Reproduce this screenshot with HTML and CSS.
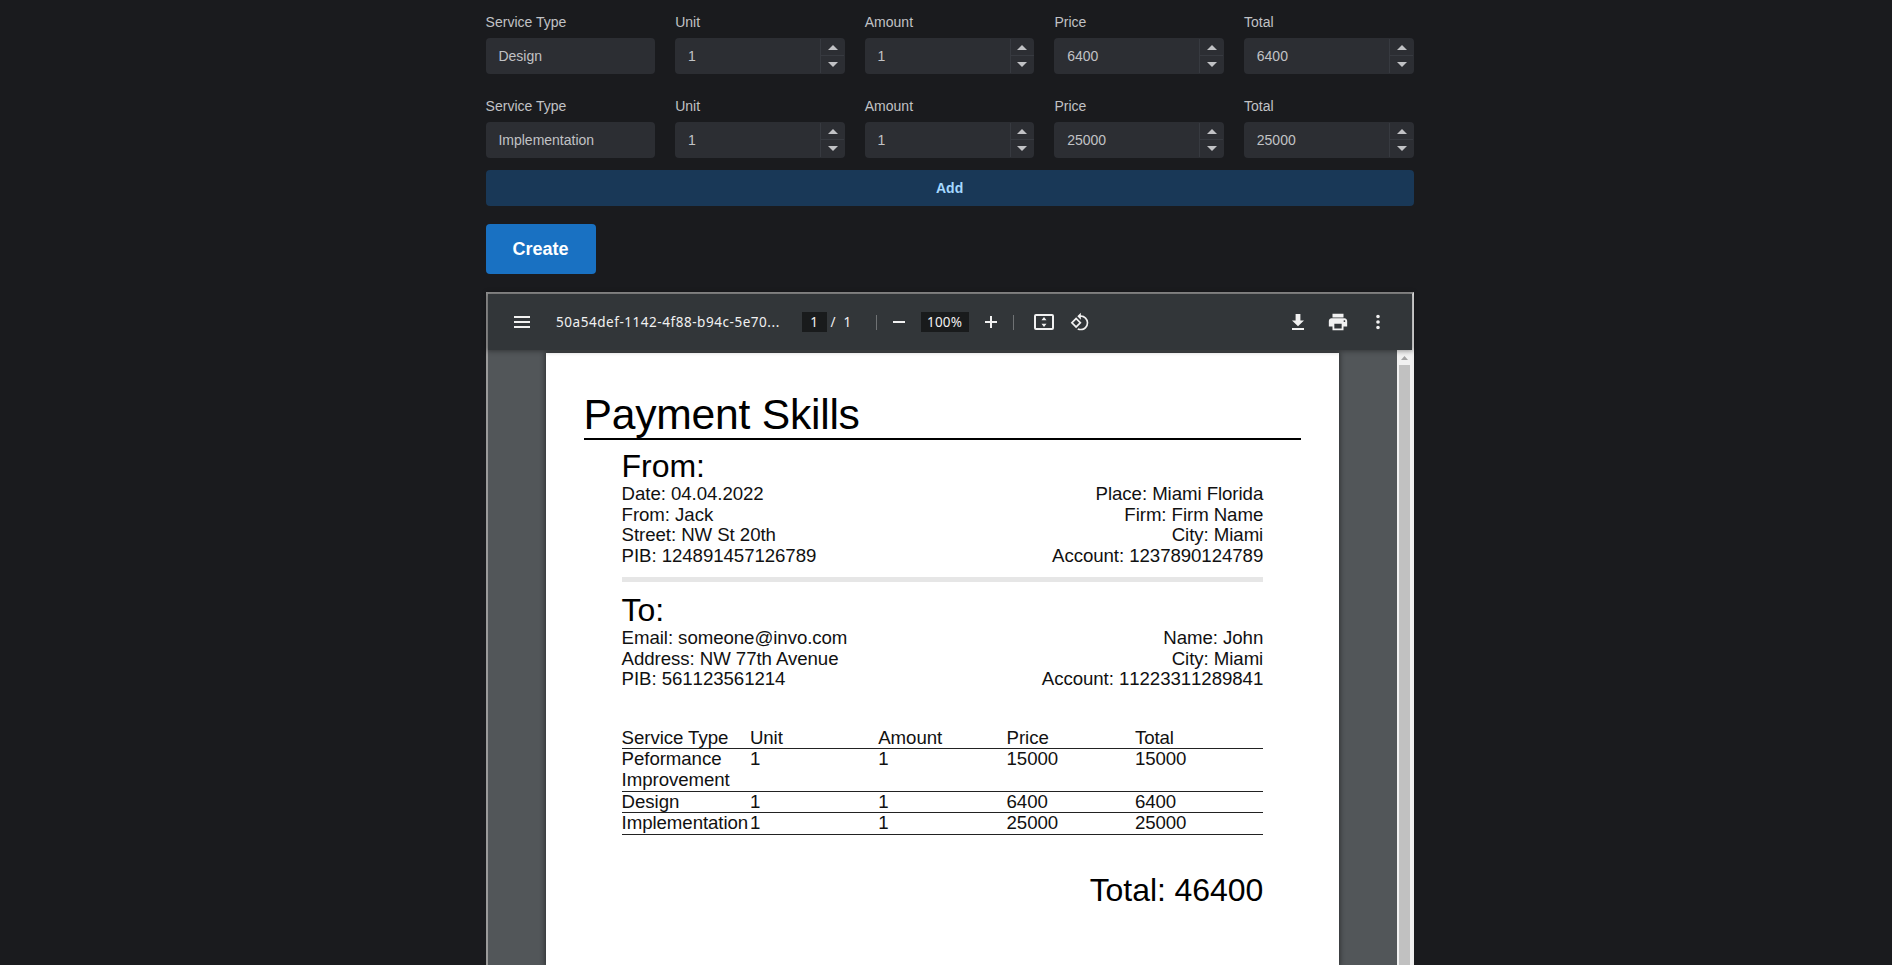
FILE: index.html
```
<!DOCTYPE html>
<html lang="en">
<head>
<meta charset="utf-8">
<title>Invoice</title>
<link rel="stylesheet" href="styles.css">
</head>
<body>
<main class="container">
  <div class="services" id="services"></div>
  <button class="btn add">Add</button>
  <button class="btn create">Create</button>

  <section class="viewer">
    <header class="toolbar">
      <svg class="menu" width="24" height="24" viewBox="0 0 24 24"><path d="M4 18h16v-2H4v2zm0-5h16v-2H4v2zm0-7v2h16V6H4z"/></svg>
      <span class="file">50a54def-1142-4f88-b94c-5e70...</span>
      <span class="box page-no">1</span>
      <span class="slash">/</span>
      <span class="count">1</span>
      <i class="sep"></i>
      <svg class="minus" width="20" height="20" viewBox="0 0 20 20"><path d="M4 9h12v2H4z"/></svg>
      <span class="box zoom">100%</span>
      <svg class="plus" width="20" height="20" viewBox="0 0 20 20"><path d="M4 9h5V4h2v5h5v2h-5v5H9v-5H4z"/></svg>
      <i class="sep sep2"></i>
      <svg class="fit" width="24" height="24" viewBox="0 0 24 24"><path d="M20 4H4a2 2 0 0 0-2 2v12a2 2 0 0 0 2 2h16a2 2 0 0 0 2-2V6a2 2 0 0 0-2-2zm0 14H4V6h16v12zM12 7l-2.5 3.3h5zM12 17l-2.5-3.3h5z"/></svg>
      <svg class="rotate" width="24" height="24" viewBox="0 0 24 24"><path d="M7.34 6.41L.86 12.9l6.49 6.48 6.49-6.48-6.5-6.49zM3.69 12.9l3.66-3.66L11 12.9l-3.66 3.66-3.65-3.66zm15.67-6.26A8.95 8.95 0 0 0 13 4V.76L8.76 5 13 9.24V6c1.79 0 3.58.68 4.95 2.05a7.007 7.007 0 0 1 0 9.9 6.973 6.973 0 0 1-7.79 1.44l-1.49 1.49C10.02 21.62 11.51 22 13 22c2.3 0 4.61-.88 6.36-2.64a8.98 8.98 0 0 0 0-12.72z"/></svg>
      <span class="grow"></span>
      <svg width="24" height="24" viewBox="0 0 24 24"><path d="M18 10.5h-3.6V4H9.6v6.5H6l6 5.8zM6 18v2h12v-2z"/></svg>
      <svg class="small" width="22" height="22" viewBox="0 0 24 24"><path d="M19 8H5c-1.66 0-3 1.34-3 3v6h4v4h12v-4h4v-6c0-1.66-1.34-3-3-3zm-3 11H8v-5h8v5zm3-7a1 1 0 1 1 0-2 1 1 0 0 1 0 2zm-1-9H6v4h12V3z"/></svg>
      <svg class="small" width="22" height="22" viewBox="0 0 24 24"><path d="M12 8a2 2 0 1 0 0-4 2 2 0 0 0 0 4zm0 2a2 2 0 1 0 0 4 2 2 0 0 0 0-4zm0 6a2 2 0 1 0 0 4 2 2 0 0 0 0-4z"/></svg>
    </header>
    <div class="stage">
      <article class="sheet">
        <h1>Payment Skills</h1>
        <div class="body">
          <h2>From:</h2>
          <div class="party">
            <div>Date: 04.04.2022<br>From: Jack<br>Street: NW St 20th<br>PIB: <span class="num">124891457126789</span></div>
            <div class="right">Place: Miami Florida<br>Firm: Firm Name<br>City: Miami<br>Account: <span class="num">1237890124789</span></div>
          </div>
          <div class="rule"></div>
          <h2>To:</h2>
          <div class="party">
            <div>Email: someone@invo.com<br>Address: NW 77th Avenue<br>PIB: <span class="num">561123561214</span></div>
            <div class="right">Name: John<br>City: Miami<br>Account: <span class="num">11223311289841</span></div>
          </div>
          <div class="table">
            <div class="row"><span>Service Type</span><span>Unit</span><span>Amount</span><span>Price</span><span>Total</span></div>
            <div class="row"><span>Peformance Improvement</span><span>1</span><span>1</span><span>15000</span><span>15000</span></div>
            <div class="row"><span>Design</span><span>1</span><span>1</span><span>6400</span><span>6400</span></div>
            <div class="row"><span>Implementation</span><span>1</span><span>1</span><span>25000</span><span>25000</span></div>
          </div>
          <h2 class="total">Total: 46400</h2>
        </div>
      </article>
      <div class="scroll">
        <svg width="15" height="15" viewBox="0 0 15 15"><path d="M4 10h7L7.5 6z"/></svg>
        <div class="thumb"></div>
      </div>
    </div>
  </section>
</main>
<script src="app.js"></script>
</body>
</html>
```
FILE: styles.css
```
* { box-sizing: border-box; }
body {
  margin: 0;
  height: 965px;
  overflow: hidden;
  background: #1a1b1e;
  color: #c1c2c5;
  font-family: "Liberation Sans", Arial, sans-serif;
  font-size: 14px;
}
.container {
  width: 928px;
  height: 965px;
  margin-left: 485.6px;
  padding-top: 11px;
  display: flex;
  flex-direction: column;
}
.services { display: grid; gap: 21px; }
.group { display: grid; grid-template-columns: repeat(5, 1fr); gap: 20px; }
.label { line-height: 22px; margin-bottom: 5px; }
.input {
  display: flex;
  height: 36px;
  padding: 1px .6px 1px 12.8px;
  line-height: 34px;
  background: #2c2e33;
  border-radius: 4px;
}
.value { flex: 1; }
.spin { width: 24px; border-left: 1px solid #373a40; display: flex; flex-direction: column; }
.spin span { height: 17px; display: flex; align-items: center; justify-content: center; }
.spin span:first-child { border-bottom: 1px solid #373a40; }
.spin svg { fill: #c1c2c5; }
.btn { font: bold 14px "Liberation Sans", Arial, sans-serif; border: 0; border-radius: 4px; padding: 0; flex: none; }
.add { margin-top: 12px; height: 36px; background: #193857; color: #a5d8ff; }
.create { margin-top: 18px; width: 110px; height: 50px; font-size: 18px; background: #1971c2; color: #fff; }
.viewer {
  margin-top: 18px;
  flex: 1;
  min-height: 0;
  display: flex;
  flex-direction: column;
  border: 2px solid #9a9a9a;
  border-right-color: #eee;
  border-bottom: 0;
}
.toolbar {
  position: relative;
  z-index: 1;
  flex: none;
  height: 56px;
  padding: 0 23px 0 22px;
  display: flex;
  align-items: center;
  background: #323639;
  color: #f1f1f1;
  font-family: "Noto Sans", sans-serif;
  font-size: 13.5px;
  box-shadow: 0 0 5px 1px rgba(0, 0, 0, .4);
}
.toolbar svg { fill: #f1f1f1; flex: none; }
.toolbar .small { margin-left: 17px; }
.toolbar .small + .small { margin-left: 18px; }
.file { width: 223.5px; margin-left: 22.5px; white-space: nowrap; letter-spacing: .54px; }
.box { height: 20px; line-height: 20px; text-align: center; background: #191b1c; }
.page-no { width: 25px; margin-left: 22px; }
.slash { width: 13px; margin-left: 4px; }
.count { width: 7px; }
.sep { width: 1px; height: 15px; margin-left: 25px; background: #6f7274; }
.minus { margin-left: 12px; }
.zoom { width: 48px; margin-left: 12px; font-size: 13.5px; letter-spacing: .2px; }
.plus { margin-left: 12px; }
.sep2 { margin-left: 12px; }
.toolbar .fit { margin-left: 18px; }
.toolbar .rotate { margin-left: 14px; width: 20px; height: 20px; }
.grow { flex: 1; }
.stage { flex: 1; min-height: 0; display: flex; background: #525659; }
.sheet {
  width: 793px;
  margin: 3px 58px 0;
  padding: 37px 38px 0;
  flex: none;
  background: #fff;
  color: #000;
  font-size: 18.67px;
  line-height: 20.6px;
  letter-spacing: -.07px;
  box-shadow: 0 0 5px 1px rgba(0, 0, 0, .45);
}
h1 { margin: 0; height: 50px; line-height: 48px; font-size: 42.67px; font-weight: 400; letter-spacing: -.26px; border-bottom: 2px solid #000; }
.body { padding: 9px 37.4px 0 38px; }
h2 { margin: 0; padding-bottom: 1px; font-size: 32px; line-height: 34px; font-weight: 400; }
.party { display: flex; justify-content: space-between; color: #111; }
.right { text-align: right; }
.num { font-kerning: none; }
.rule { height: 5.5px; margin: 10.2px 0 10.9px; background: #e6e6e6; }
.table { margin-top: 38.1px; color: #111; }
.row { display: grid; grid-template-columns: repeat(5, 1fr); border-bottom: 1px solid #222; }
.row span { min-width: 0; }
.total { margin-top: 38.6px; text-align: right; }
.scroll { width: 15px; background: #f1f1f1; display: flex; flex-direction: column; }
.scroll svg { fill: #a3a3a3; flex: none; }
.thumb { flex: 1; margin: 0 2px; background: #c1c1c1; }
```
FILE: app.js
```
const services = [
  ["Design", 1, 1, 6400, 6400],
  ["Implementation", 1, 1, 25000, 25000],
];
const labels = ["Service Type", "Unit", "Amount", "Price", "Total"];
const spinner = `<div class="spin">
  <span><svg width="10" height="5" viewBox="0 0 10 5"><path d="M0 5h10L5 0z"/></svg></span>
  <span><svg width="10" height="5" viewBox="0 0 10 5"><path d="M0 0h10L5 5z"/></svg></span>
</div>`;

document.getElementById("services").innerHTML = services.map(row =>
  `<div class="group">${row.map((value, i) =>
    `<div><div class="label">${labels[i]}</div><div class="input"><span class="value">${value}</span>${i ? spinner : ""}</div></div>`
  ).join("")}</div>`
).join("");
```
